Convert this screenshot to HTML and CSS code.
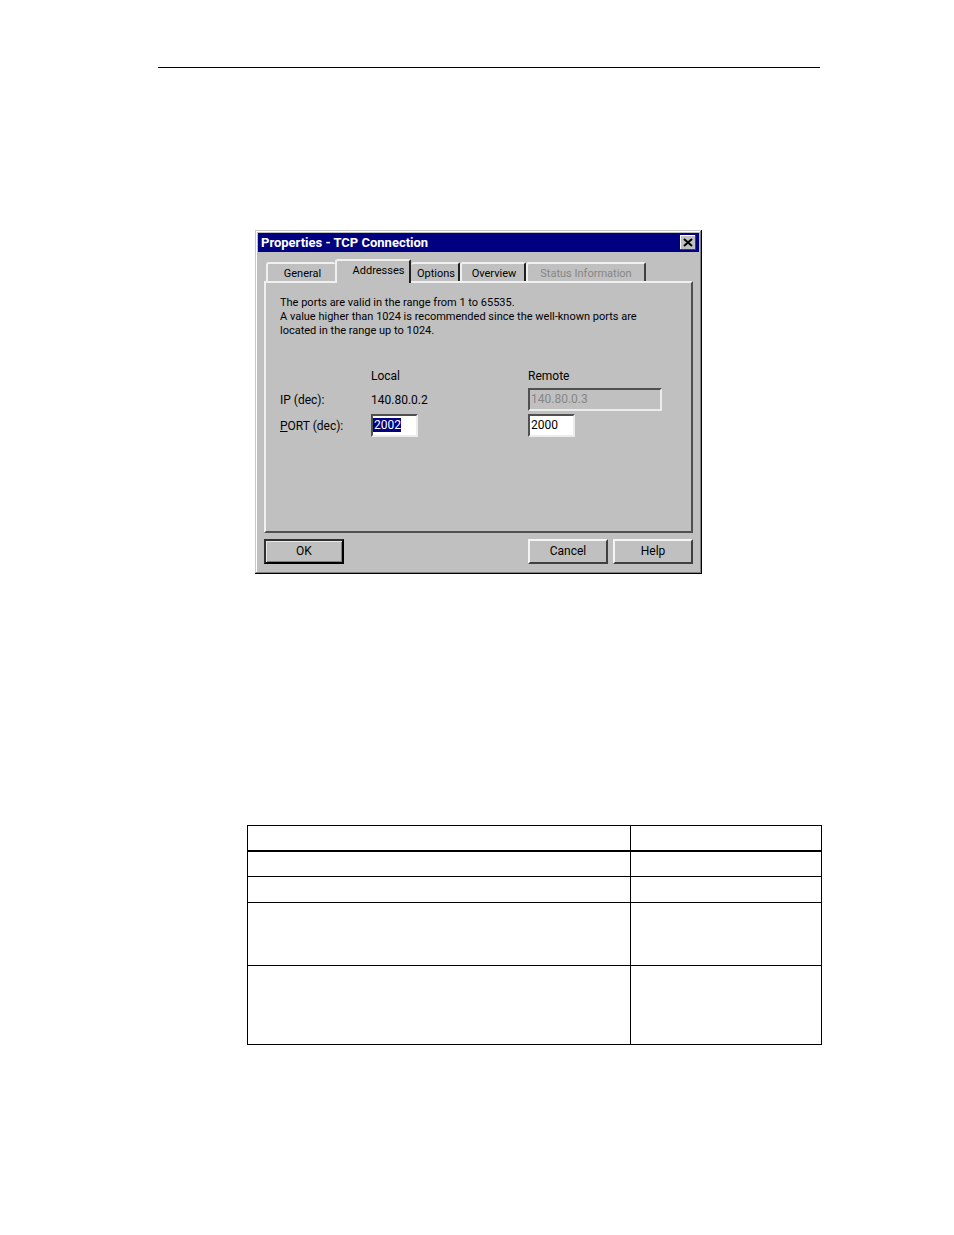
FILE: index.html
```html
<!DOCTYPE html>
<html lang="en">
<head>
<meta charset="utf-8">
<meta name="viewport" content="width=device-width, initial-scale=1">
<title>Properties - TCP Connection</title>
<link rel="stylesheet" href="styles.css">
</head>
<body>
<main class="page">
  <hr class="rule">
  <form class="dialog" role="dialog" aria-labelledby="title">
    <header class="titlebar">
      <h1 class="title" id="title">Properties - TCP Connection</h1>
      <button class="close" type="button" aria-label="Close">
        <svg width="10" height="9" viewBox="0 0 10 9" aria-hidden="true"><path d="M1 1L9 8M9 1L1 8" stroke="#000" stroke-width="2" fill="none"/></svg>
      </button>
    </header>
    <div class="content">
      <div class="tabs" role="tablist">
        <button class="tab general" type="button" role="tab">General</button>
        <button class="tab addresses" type="button" role="tab" aria-selected="true">Addresses</button>
        <button class="tab options" type="button" role="tab">Options</button>
        <button class="tab overview" type="button" role="tab">Overview</button>
        <button class="tab status" type="button" role="tab" disabled>Status Information</button>
      </div>
      <section class="panel" role="tabpanel">
        <p class="hint">The ports are valid in the range from 1 to 65535.<br>A value higher than 1024 is recommended since the well-known ports are<br>located in the range up to 1024.</p>
        <div class="fields">
          <span></span><span>Local</span><span>Remote</span>
          <label for="remote-ip">IP (dec):</label>
          <span>140.80.0.2</span>
          <input class="field ip" id="remote-ip" type="text" value="140.80.0.3" disabled>
          <label for="local-port"><u>P</u>ORT (dec):</label>
          <input class="field port selected" id="local-port" type="text" value="2002">
          <input class="field port" type="text" value="2000" aria-label="Remote port">
        </div>
      </section>
      <footer class="actions">
        <button class="button default" type="submit">OK</button>
        <button class="button cancel" type="button">Cancel</button>
        <button class="button" type="button">Help</button>
      </footer>
    </div>
  </form>
  <table class="grid">
    <colgroup><col class="wide"><col></colgroup>
    <thead>
      <tr class="head"><th></th><th></th></tr>
    </thead>
    <tbody>
      <tr class="short"><td></td><td></td></tr>
      <tr class="short"><td></td><td></td></tr>
      <tr class="medium"><td></td><td></td></tr>
      <tr class="tall"><td></td><td></td></tr>
    </tbody>
  </table>
</main>
</body>
</html>
```
FILE: styles.css
```css
* { box-sizing: border-box; }

body {
  margin: 0;
  background: #fff;
  color: #000;
}

.page { padding: 67px 132px 190px 158px; }

.rule {
  height: 1px;
  margin: 0 2px 162px 0;
  border: 0;
  background: #000;
}

.dialog {
  max-width: 447px;
  margin-left: 97px;
  padding: 3px;
  background: #c0c0c0;
  box-shadow: inset -1px -1px #000, inset 1px 1px #c8c8c8, inset -2px -2px #808080, inset 2px 2px #fff;
  font: 12px/14px Roboto, "Liberation Sans", sans-serif;
}

.dialog button,
.dialog input {
  font: inherit;
  color: inherit;
}

.titlebar {
  display: flex;
  align-items: center;
  justify-content: space-between;
  height: 19px;
  padding: 0 3px;
  background: #000080;
}

.title {
  margin: 0;
  color: #fff;
  font-size: 13px;
  font-weight: 700;
}

.close {
  display: flex;
  align-items: center;
  justify-content: center;
  width: 16px;
  height: 15px;
  padding: 0;
  border: 0;
  background: #c0c0c0;
  box-shadow: inset -1px -1px #404040, inset 1px 1px #fff;
}

.content { padding: 7px 6px 7px; }

.tabs {
  display: flex;
  align-items: flex-end;
  padding-left: 2px;
}

.dialog .tab {
  height: 19px;
  padding: 2px 0 0;
  border: 0;
  border-top: 2px solid #f0f0f0;
  border-right: 2px solid #202020;
  border-radius: 3px 2px 0 0;
  background: #c0c0c0;
  font-size: 11px;
  text-align: center;
  white-space: nowrap;
}

.dialog .general {
  width: 69px;
  padding-left: 2px;
  border-left: 2px solid #f0f0f0;
  border-right: 0;
}

.dialog .addresses {
  position: relative;
  width: 76px;
  height: 24px;
  margin-bottom: -2px;
  padding: 0 3px 2px 14px;
  border-left: 2px solid #f0f0f0;
}

.dialog .options {
  width: 49px;
  padding-left: 3px;
}

.dialog .overview {
  width: 66px;
  padding-left: 2px;
  border-left: 2px solid #f0f0f0;
}

.dialog .status {
  width: 120px;
  border-left: 2px solid #f0f0f0;
  border-right-color: #404040;
  color: #868686;
}

.panel {
  min-height: 252px;
  padding: 13px 14px;
  border: 2px solid;
  border-color: #f0f0f0 #505050 #505050 #f0f0f0;
}

.hint {
  margin: 0 0 28px;
  font-size: 11px;
}

.fields {
  display: grid;
  grid-template-columns: 91px 157px 1fr;
  grid-template-rows: 19px 23px 23px;
  row-gap: 3px;
  align-items: center;
}

.field {
  height: 23px;
  padding: 0 1px 2px;
  border: 2px solid;
  border-color: #505050 #ececec #ececec #505050;
  border-radius: 0;
  background: #fff;
  outline: 0;
}

.port { width: 47px; }

.ip {
  width: 134px;
  background: #c0c0c0;
}

.dialog .ip { color: #868686; }

.dialog .selected {
  color: #fff;
  background: linear-gradient(#000080, #000080) 0 2px / 28px 14px no-repeat #fff;
}

.actions {
  display: flex;
  gap: 5px;
  padding-top: 6px;
}

.button {
  width: 80px;
  height: 25px;
  padding: 0 0 1px;
  border: 2px solid;
  border-color: #f4f4f4 #404040 #404040 #f4f4f4;
  background: #c0c0c0;
}

.default {
  border-color: #303030 #000 #000 #303030;
  box-shadow: inset 1px 1px #e8e8e8, inset -1px -1px #808080;
}

.cancel { margin-left: auto; }

.grid {
  width: calc(100% - 89px);
  margin: 251px 0 0 89px;
  border-collapse: collapse;
  table-layout: fixed;
}

.wide { width: 66.7%; }

.grid th,
.grid td {
  padding: 0;
  border: 1px solid #000;
}

.head { height: 25px; }
.grid .head th { border-bottom-width: 2px; }
.short { height: 26px; }
.medium { height: 63px; }
.tall { height: 79px; }
```
